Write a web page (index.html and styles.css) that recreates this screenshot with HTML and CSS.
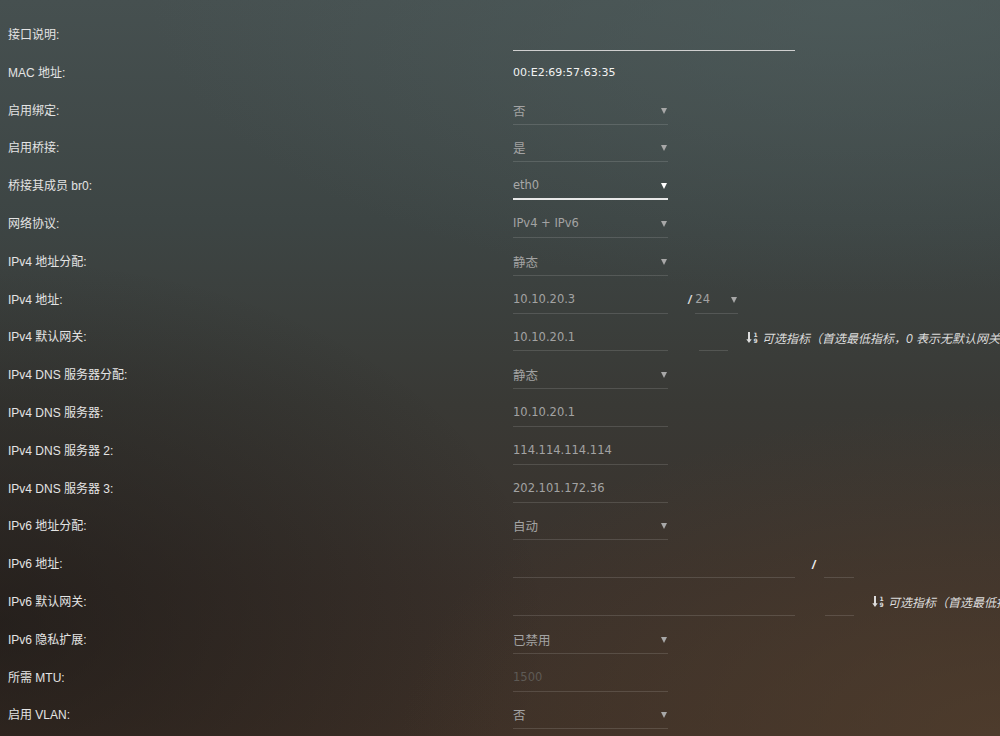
FILE: index.html
```html
<!DOCTYPE html>
<html lang="zh-CN">
<head>
  <meta charset="UTF-8" />
  <title>接口 - LAN</title>
  <link rel="stylesheet" href="styles.css">
</head>
<body>

  <div id="iface-form">

    <div class="row">
      <label class="label">接口说明:</label>
      <div class="field"><input type="text" class="text wide focused" value="" /></div>
    </div>

    <div class="row">
      <label class="label">MAC 地址:</label>
      <div class="field"><span class="value">00:E2:69:57:63:35</span></div>
    </div>

    <div class="row">
      <label class="label">启用绑定:</label>
      <div class="field"><div class="select"><span class="cjk">否</span><i class="caret"></i></div></div>
    </div>

    <div class="row">
      <label class="label">启用桥接:</label>
      <div class="field"><div class="select"><span class="cjk">是</span><i class="caret"></i></div></div>
    </div>

    <div class="row">
      <label class="label">桥接其成员 br0:</label>
      <div class="field"><div class="select active"><span>eth0</span><i class="caret"></i></div></div>
    </div>

    <div class="row">
      <label class="label">网络协议:</label>
      <div class="field"><div class="select"><span>IPv4 + IPv6</span><i class="caret"></i></div></div>
    </div>

    <div class="row">
      <label class="label">IPv4 地址分配:</label>
      <div class="field"><div class="select"><span class="cjk">静态</span><i class="caret"></i></div></div>
    </div>

    <div class="row">
      <label class="label">IPv4 地址:</label>
      <div class="field">
        <input type="text" class="text" value="10.10.20.3" />
        <span class="slash">/</span>
        <div class="select mask"><span>24</span><i class="caret"></i></div>
      </div>
    </div>

    <div class="row">
      <label class="label">IPv4 默认网关:</label>
      <div class="field clip">
        <input type="text" class="text" value="10.10.20.1" />
        <input type="text" class="text metric gw4" value="" />
        <span class="hint">
          <svg class="sort-icon" width="13" height="13" viewBox="0 0 13 13">
            <path d="M3 1v8.5" stroke="#ddd" stroke-width="2" fill="none"/>
            <path d="M0.3 8.2L3 12l2.7-3.8z" fill="#ddd"/>
            <text x="9.5" y="5.6" font-size="6" font-weight="bold" fill="#ddd" text-anchor="middle">1</text>
            <text x="9.5" y="12.4" font-size="6" font-weight="bold" fill="#ddd" text-anchor="middle">9</text>
          </svg>
          <em>可选指标（首选最低指标，0 表示无默认网关）</em>
        </span>
      </div>
    </div>

    <div class="row">
      <label class="label">IPv4 DNS 服务器分配:</label>
      <div class="field"><div class="select"><span class="cjk">静态</span><i class="caret"></i></div></div>
    </div>

    <div class="row">
      <label class="label">IPv4 DNS 服务器:</label>
      <div class="field"><input type="text" class="text" value="10.10.20.1" /></div>
    </div>

    <div class="row">
      <label class="label">IPv4 DNS 服务器 2:</label>
      <div class="field"><input type="text" class="text" value="114.114.114.114" /></div>
    </div>

    <div class="row">
      <label class="label">IPv4 DNS 服务器 3:</label>
      <div class="field"><input type="text" class="text" value="202.101.172.36" /></div>
    </div>

    <div class="row">
      <label class="label">IPv6 地址分配:</label>
      <div class="field"><div class="select"><span class="cjk">自动</span><i class="caret"></i></div></div>
    </div>

    <div class="row">
      <label class="label">IPv6 地址:</label>
      <div class="field">
        <input type="text" class="text wide" value="" />
        <span class="slash v6">/</span>
        <input type="text" class="text metric" value="" />
      </div>
    </div>

    <div class="row">
      <label class="label">IPv6 默认网关:</label>
      <div class="field clip">
        <input type="text" class="text wide" value="" />
        <input type="text" class="text metric gw6" value="" />
        <span class="hint">
          <svg class="sort-icon" width="13" height="13" viewBox="0 0 13 13">
            <path d="M3 1v8.5" stroke="#ddd" stroke-width="2" fill="none"/>
            <path d="M0.3 8.2L3 12l2.7-3.8z" fill="#ddd"/>
            <text x="9.5" y="5.6" font-size="6" font-weight="bold" fill="#ddd" text-anchor="middle">1</text>
            <text x="9.5" y="12.4" font-size="6" font-weight="bold" fill="#ddd" text-anchor="middle">9</text>
          </svg>
          <em>可选指标（首选最低指标，0 表示无默认网关）</em>
        </span>
      </div>
    </div>

    <div class="row">
      <label class="label">IPv6 隐私扩展:</label>
      <div class="field"><div class="select"><span class="cjk">已禁用</span><i class="caret"></i></div></div>
    </div>

    <div class="row">
      <label class="label">所需 MTU:</label>
      <div class="field"><input type="text" class="text" value="1500" disabled /></div>
    </div>

    <div class="row">
      <label class="label">启用 VLAN:</label>
      <div class="field"><div class="select"><span class="cjk">否</span><i class="caret"></i></div></div>
    </div>

  </div>

</body>
</html>
```

FILE: styles.css
```css
html, body {
  margin: 0;
  height: 100%;
  overflow: hidden;
}

body {
  font-family: "Liberation Sans", "Noto Sans CJK SC", sans-serif;
  font-size: 12px;
  color: #e4e4e4;
  background:
    radial-gradient(ellipse 60% 45% at 100% 100%, rgba(84, 64, 46, 0.7), rgba(84, 64, 46, 0) 100%),
    radial-gradient(ellipse 55% 50% at 0% 85%, rgba(20, 18, 17, 0.55), rgba(20, 18, 17, 0) 100%),
    radial-gradient(ellipse 70% 40% at 85% 0%, rgba(80, 95, 95, 0.6), rgba(80, 95, 95, 0) 100%),
    linear-gradient(to bottom, #465050 0%, #3d4544 30%, #393935 55%, #3a312b 80%, #3d3027 100%);
}

#iface-form {
  padding: 16px 0 0 8px;
}

.row {
  display: flex;
  height: 37.8px;
}

.label {
  flex: none;
  width: 505px;
  line-height: 38px;
  white-space: nowrap;
}

.field {
  display: flex;
  align-items: flex-end;
  height: 28px;
  margin-top: 5px;
  white-space: nowrap;
  font-family: "DejaVu Sans", "Noto Sans CJK SC", sans-serif;
  font-size: 11.5px;
}

.field.clip {
  flex: 1;
  min-width: 0;
  overflow: hidden;
}

.value {
  line-height: 28px;
  color: #f2f2f2;
  font-size: 11px;
}

/* underlined inputs and selects */
.text, .select {
  flex: none;
  box-sizing: border-box;
  width: 155px;
  height: 28px;
  padding: 0;
  border: none;
  border-bottom: 1px solid rgba(255, 255, 255, 0.13);
  background: transparent;
  font: inherit;
  color: #a3a3a3;
  outline: none;
}

.text.wide {
  width: 282px;
}

.text.focused {
  border-bottom: 1px solid #cfcfcf;
  height: 30px;
  margin-bottom: -2px;
}

.text:disabled {
  color: #5e5a55;
}

.select {
  display: flex;
  align-items: center;
  justify-content: space-between;
  padding-right: 1px;
}

.select .cjk {
  font-family: "Noto Sans CJK SC", sans-serif;
  font-size: 12.5px;
}

.select.active {
  border-bottom: 2px solid #e8e8e8;
  color: #a8a8a8;
}

.caret {
  width: 0;
  height: 0;
  border-left: 3px solid transparent;
  border-right: 3px solid transparent;
  border-top: 6px solid #a8a8a8;
  margin-top: 1px;
}

.select.active .caret {
  border-top-color: #ffffff;
}

.select.mask {
  width: 43px;
  margin-left: 4px;
}

.slash {
  line-height: 28px;
  margin-left: 20px;
  font-family: "Liberation Sans", sans-serif;
  font-size: 12px;
  font-weight: bold;
  font-style: italic;
  color: #d8d8d8;
}

.slash.v6 {
  margin-left: 17px;
  margin-right: 9px;
  color: #f0f0f0;
  line-height: 26px;
}

.text.metric {
  width: 30px;
}

.text.gw4 {
  margin-left: 31px;
  width: 29px;
}

.text.gw6 {
  margin-left: 30px;
  width: 29px;
}

.hint {
  display: flex;
  align-items: center;
  height: 28px;
  margin-left: 18px;
  color: #dcdcdc;
  font-family: "Liberation Sans", "Noto Sans CJK SC", sans-serif;
  font-size: 12px;
}

.sort-icon {
  flex: none;
  margin-right: 3px;
  font-family: "DejaVu Sans", sans-serif;
}

.hint em {
  font-style: italic;
}
```
